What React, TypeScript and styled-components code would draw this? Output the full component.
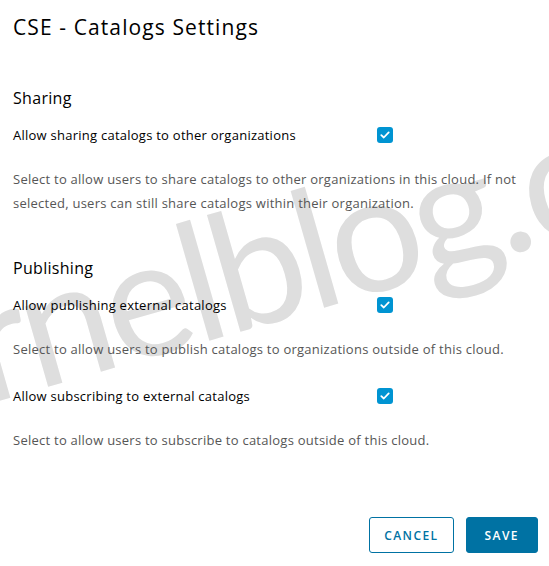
import React from 'react'
import styled, { createGlobalStyle } from 'styled-components'

const GlobalStyle = createGlobalStyle`
  html, body {
    margin: 0;
    padding: 0;
    background: #ffffff;
  }
  body {
    font-family: "Open Sans", "Noto Sans", sans-serif;
    color: #000000;
  }
`

const settings = [
  {
    title: 'Sharing',
    items: [
      {
        label: 'Allow sharing catalogs to other organizations',
        help: 'Select to allow users to share catalogs to other organizations in this cloud. If not selected, users can still share catalogs within their organization.',
      },
    ],
  },
  {
    title: 'Publishing',
    items: [
      {
        label: 'Allow publishing external catalogs',
        help: 'Select to allow users to publish catalogs to organizations outside of this cloud.',
      },
      {
        label: 'Allow subscribing to external catalogs',
        help: 'Select to allow users to subscribe to catalogs outside of this cloud.',
      },
    ],
  },
]

const CheckBox = () => (
  <Box>
    <svg width="10" height="8" viewBox="0 0 10 8">
      <path d="M1.3 4.2 L3.8 6.5 L8.7 1.4" fill="none" stroke="#fff" strokeWidth="1.8" strokeLinecap="round" strokeLinejoin="round" />
    </svg>
  </Box>
)

const App = () => {
  return (
    <Page>
      <GlobalStyle />
      <Watermark width="549" height="566" viewBox="0 0 549 566">
        <text
          x="-15"
          y="405"
          transform="rotate(-16 -15 405)"
          fontSize="165"
          letterSpacing="-6"
          fill="#dedede"
          fontFamily="Lato, sans-serif"
        >
          rnelblog.com
        </text>
      </Watermark>
      <Content>
        <Title>CSE - Catalogs Settings</Title>
        {settings.map((section) => (
          <Section key={section.title}>
            <SectionTitle>{section.title}</SectionTitle>
            {section.items.map((item) => (
              <Item key={item.label}>
                <Row>
                  <Label>{item.label}</Label>
                  <CheckBox />
                </Row>
                <Help>{item.help}</Help>
              </Item>
            ))}
          </Section>
        ))}
        <Footer>
          <Button>CANCEL</Button>
          <Button primary>SAVE</Button>
        </Footer>
      </Content>
    </Page>
  )
}

const Page = styled.div`
  position: relative;
  width: 549px;
  height: 566px;
  overflow: hidden;
  background: #ffffff;
`

const Watermark = styled.svg`
  position: absolute;
  left: 0;
  top: 0;
  z-index: 0;
  pointer-events: none;
`

const Content = styled.div`
  position: relative;
  z-index: 1;
  display: flex;
  flex-direction: column;
  padding: 13px 11px 0 13px;
`

const Title = styled.div`
  font-size: 21px;
  line-height: 28px;
  letter-spacing: 1.1px;
  color: #000;
  margin-bottom: 45px;
`

const Section = styled.div`
  display: flex;
  flex-direction: column;
  gap: 23px;
  & + & {
    margin-top: 41px;
  }
`

const SectionTitle = styled.div`
  font-size: 16px;
  line-height: 24px;
  letter-spacing: 0.3px;
  color: #000;
  margin-bottom: -10px;
`

const Item = styled.div`
  display: flex;
  flex-direction: column;
  gap: 20px;
`

const Row = styled.div`
  display: grid;
  grid-template-columns: 364px 16px;
  align-items: center;
  height: 24px;
`

const Label = styled.div`
  font-size: 13px;
  letter-spacing: 0.25px;
  color: #000;
`

const Box = styled.div`
  width: 16px;
  height: 16px;
  border-radius: 3px;
  background: #0094d2;
  display: flex;
  align-items: center;
  justify-content: center;
`

const Help = styled.div`
  font-size: 13px;
  letter-spacing: 0.25px;
  line-height: 24px;
  color: #565656;
  max-width: 512px;
`

const Footer = styled.div`
  display: flex;
  justify-content: flex-end;
  gap: 12px;
  margin-top: 65px;
`

const Button = styled.button<{ primary?: boolean }>`
  height: 36px;
  padding: 0 ${(p) => (p.primary ? '18px' : '14px')};
  border-radius: 3px;
  border: 1px solid #0072a3;
  background: ${(p) => (p.primary ? '#0072a3' : '#ffffff')};
  color: ${(p) => (p.primary ? '#ffffff' : '#0072a3')};
  font-family: "Open Sans", "Noto Sans", sans-serif;
  font-size: 12px;
  font-weight: 600;
  letter-spacing: 0.12em;
  cursor: pointer;
`

export default App
